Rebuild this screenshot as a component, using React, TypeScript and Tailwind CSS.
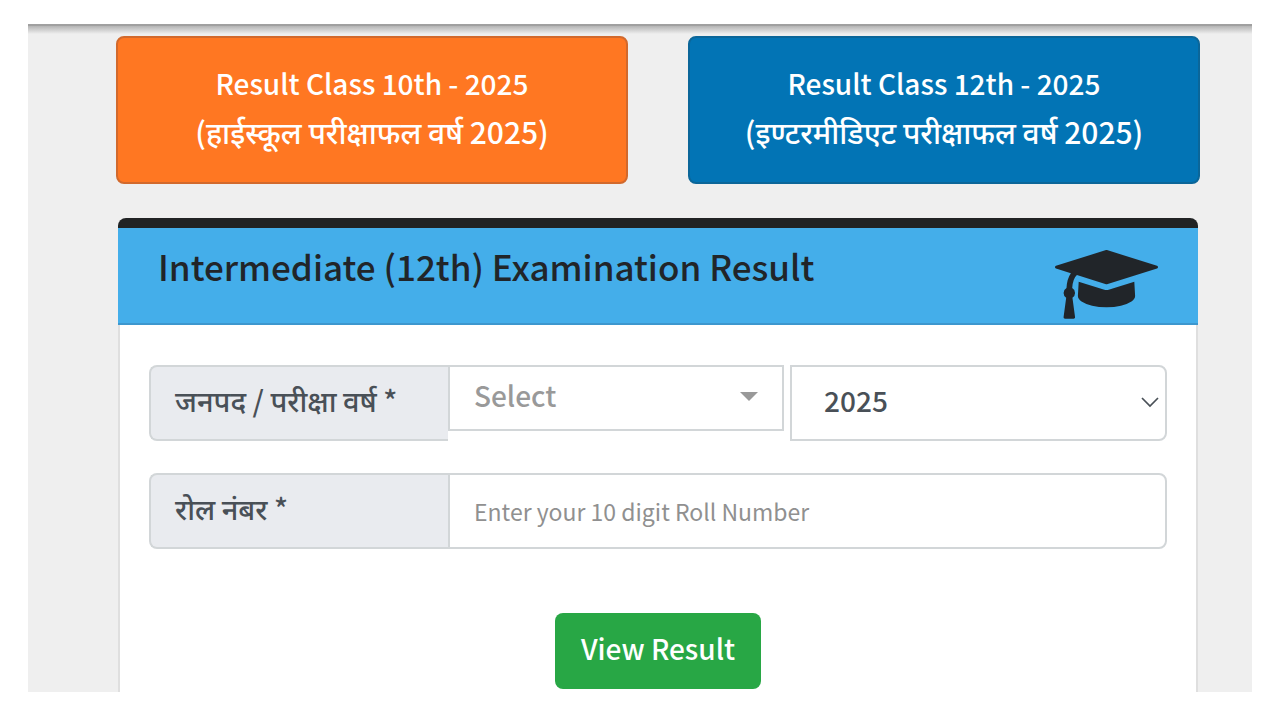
import { useState } from "react";

function GraduationCap() {
  return (
    <svg viewBox="0 128 2304 1536" className="w-[103px] shrink-0 text-[#212529]" fill="currentColor" aria-hidden="true">
      <path d="M1774 836l18 316q4 69-82 128t-235 93.5-323 34.5-323-34.5-235-93.5-82-128l18-316 574 181q22 7 48 7t48-7zm530-324q0 23-22 31l-1120 352q-4 1-10 1t-10-1l-652-206q-43 34-71 111.5t-34 178.5q63 36 63 109 0 69-58 107l58 433q2 14-8 25-9 11-24 11h-192q-15 0-24-11-10-11-8-25l58-433q-58-38-58-107 0-73 65-111 11-207 98-330l-333-104q-22-8-22-31t22-31l1120-352q4-1 10-1t10 1l1120 352q22 8 22 31z" />
    </svg>
  );
}

export default function App() {
  const [district, setDistrict] = useState("");
  const [year, setYear] = useState("2025");
  const [roll, setRoll] = useState("");

  return (
    <div className="bg-white px-7 pt-6 pb-7 font-['Noto_Sans_CJK_JP','Noto_Sans',sans-serif] font-medium">
      <main className="border-t-2 border-[#a0a0a0] bg-[#efefef]">
        <div className="h-2 bg-linear-to-b from-[#b4b4b4] to-[#efefef]" />

        <div className="pt-0.5 pr-[52px] pl-[88px]">
          <nav className="grid grid-cols-2 gap-[60px] text-center text-[28px] leading-12 text-white">
            <a href="#class-10" className="rounded-lg border-2 border-[#d2692c] bg-[#ff7722] pt-[21px] pb-[27px]">
              <span className="block">Result Class 10th - 2025</span>
              <span className="block text-[30px]">(हाईस्कूल परीक्षाफल वर्ष 2025)</span>
            </a>
            <a href="#class-12" className="rounded-lg border-2 border-[#0b6699] bg-[#0274b5] pt-[21px] pb-[27px]">
              <span className="block">Result Class 12th - 2025</span>
              <span className="block text-[30px]">(इण्टरमीडिएट परीक्षाफल वर्ष 2025)</span>
            </a>
          </nav>

          <section className="mx-0.5 mt-[34px] rounded-t-lg border-x-2 border-[#dfdfdf] bg-white">
            <header className="-mx-0.5 flex h-[107px] items-start justify-between rounded-t-lg border-t-10 border-b-2 border-t-[#212324] border-b-[#3d97ce] bg-[#44aeea] px-10">
              <h1 className="pt-2.5 text-[35px] leading-14 text-[#212529]">
                Intermediate (12th) Examination Result
              </h1>
              <div className="pt-[22px]">
                <GraduationCap />
              </div>
            </header>

            <form className="px-[29px] pt-10 pb-[3px]" onSubmit={(e) => e.preventDefault()}>
              <div className="flex items-start text-[28px] text-[#495057]">
                <label htmlFor="district" className="h-[76px] w-[299px] shrink-0 rounded-l-lg border-2 border-r-0 border-[#d2d6d8] bg-[#e9ebef] pl-6 text-[29px] leading-16">
                  जनपद / परीक्षा वर्ष *
                </label>
                <div className="relative w-[336px]">
                  <select
                    id="district"
                    value={district}
                    onChange={(e) => setDistrict(e.target.value)}
                    className="h-[66px] w-full appearance-none border-2 border-[#d2d6d8] bg-white pb-1.5 pl-6 text-[#999999]"
                  >
                    <option value="">Select</option>
                  </select>
                  <svg viewBox="0 0 18 9" className="pointer-events-none absolute top-[27px] right-[26px] w-[18px]" fill="#999999" aria-hidden="true">
                    <path d="M0 0h18L9 9z" />
                  </svg>
                </div>
                <div className="relative ml-1.5 flex-1">
                  <select
                    aria-label="परीक्षा वर्ष"
                    value={year}
                    onChange={(e) => setYear(e.target.value)}
                    className="h-[76px] w-full appearance-none rounded-r-lg border-2 border-[#d2d6d8] bg-white pb-1.5 pl-8"
                  >
                    <option value="2025">2025</option>
                  </select>
                  <svg viewBox="0 0 18 11" className="pointer-events-none absolute top-8 right-2 w-[18px]" fill="none" stroke="#495057" strokeWidth="1.7" aria-hidden="true">
                    <path d="M1 1l8 8 8-8" />
                  </svg>
                </div>
              </div>

              <div className="mt-8 flex text-[#495057]">
                <label htmlFor="roll" className="h-[76px] w-[299px] shrink-0 rounded-l-lg border-2 border-r-0 border-[#d2d6d8] bg-[#e9ebef] pl-6 text-[29px] leading-16">
                  रोल नंबर *
                </label>
                <input
                  id="roll"
                  type="text"
                  value={roll}
                  onChange={(e) => setRoll(e.target.value)}
                  placeholder="Enter your 10 digit Roll Number"
                  className="h-[76px] min-w-0 flex-1 rounded-r-lg border-2 border-[#d2d6d8] bg-white pl-6 text-[23px] font-normal placeholder:text-[#909090]"
                />
              </div>

              <div className="mt-16 flex justify-center">
                <button type="submit" className="h-[76px] rounded-lg bg-[#28a745] px-[26px] pb-1.5 text-[28px] text-white">
                  View Result
                </button>
              </div>
            </form>
          </section>
        </div>
      </main>
    </div>
  );
}
